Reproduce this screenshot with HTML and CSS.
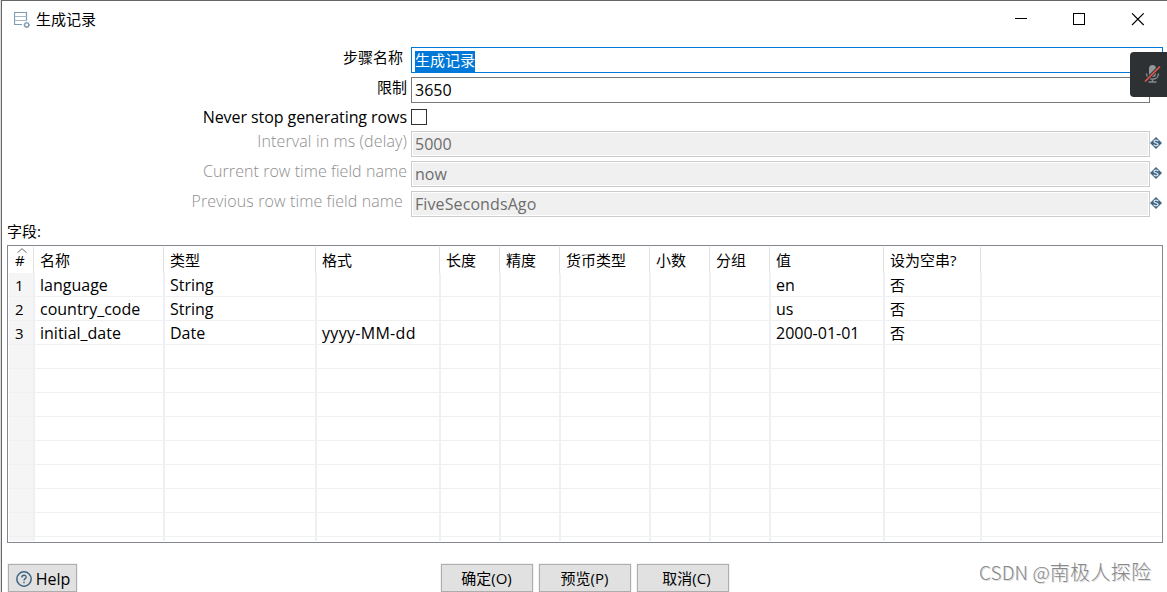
FILE: index.html
```html
<!DOCTYPE html>
<html lang="zh-CN">
<head>
<meta charset="utf-8">
<title>生成记录</title>
<link rel="stylesheet" href="styles.css">
</head>
<body>
<div class="window">
  <header class="titlebar">
    <svg class="app-icon" width="17" height="17" viewBox="0 0 17 17" fill="none" stroke="#7d9bb3">
      <path d="M8 12.500H.500V.500H12.500V8.500" stroke-width="1.200"/><path d="M.500 4.500H12.500M.500 8.500H12.500" stroke="#a3b8c9"/>
      <circle cx="12.700" cy="12.900" r="2.100" stroke-width="1.300"/><path d="M12.700 9.700v1M12.700 15v1M9.500 12.900h1M15 12.900h1M10.500 10.700l.7.7M14.300 14.500l.7.7M15 10.700l-.7.7M11.200 14.500l-.7.7"/>
    </svg>
    <h1 class="title">生成记录</h1>
    <svg class="win-controls" width="131" height="14" viewBox="0 0 131 14" fill="none" stroke="#000">
      <path d="M0 5.500H12"/><rect x="58.500" y=".500" width="11" height="11"/><path d="M117 .300L128.700 12M128.700 .300L117 12" stroke-width="1.100"/>
    </svg>
  </header>
  <form class="form">
    <div class="row"><label class="label pad">步骤名称</label><div class="field focus wide"><span class="sel">生成记录</span></div></div>
    <div class="row"><label class="label">限制</label><div class="field">3650</div></div>
    <div class="row check-row"><label class="label never">Never stop generating rows</label><span class="checkbox"></span></div>
    <div class="row"><label class="label off interval">Interval in ms (delay)</label><div class="field disabled">5000</div><svg class="var" width="12" height="12" viewBox="0 0 12 12"><path d="M6 0L12 6L6 12L0 6Z" fill="#406583"/><path d="M8.200 4.300C7.700 2.700 4 2.700 4 4.500C4 6.300 8.100 5.500 8.100 7.500C8.100 9.200 4.200 9.200 3.800 7.600" fill="none" stroke="#dce5ec" stroke-width="1.300"/></svg></div>
    <div class="row"><label class="label off current">Current row time field name</label><div class="field disabled">now</div><svg class="var" width="12" height="12" viewBox="0 0 12 12"><path d="M6 0L12 6L6 12L0 6Z" fill="#406583"/><path d="M8.200 4.300C7.700 2.700 4 2.700 4 4.500C4 6.300 8.100 5.500 8.100 7.500C8.100 9.200 4.200 9.200 3.800 7.600" fill="none" stroke="#dce5ec" stroke-width="1.300"/></svg></div>
    <div class="row"><label class="label off previous pad">Previous row time field name</label><div class="field disabled five">FiveSecondsAgo</div><svg class="var" width="12" height="12" viewBox="0 0 12 12"><path d="M6 0L12 6L6 12L0 6Z" fill="#406583"/><path d="M8.200 4.300C7.700 2.700 4 2.700 4 4.500C4 6.300 8.100 5.500 8.100 7.500C8.100 9.200 4.200 9.200 3.800 7.600" fill="none" stroke="#dce5ec" stroke-width="1.300"/></svg></div>
  </form>
  <div class="caption">字段:</div>
  <div class="table">
    <div class="tr head"><span class="num">#<svg class="sort" width="10" height="5" viewBox="0 0 10 5" fill="none" stroke="#666"><path d="M.500 4.700L5 .700L9.500 4.700"/></svg></span><span>名称</span><span>类型</span><span>格式</span><span>长度</span><span>精度</span><span>货币类型</span><span>小数</span><span>分组</span><span>值</span><span>设为空串?</span><span></span></div>
    <div class="tr"><span>1</span><span>language</span><span>String</span><span></span><span></span><span></span><span></span><span></span><span></span><span>en</span><span class="zh">否</span><span></span></div>
    <div class="tr"><span>2</span><span>country_code</span><span>String</span><span></span><span></span><span></span><span></span><span></span><span></span><span>us</span><span class="zh">否</span><span></span></div>
    <div class="tr"><span>3</span><span>initial_date</span><span>Date</span><span class="format">yyyy-MM-dd</span><span></span><span></span><span></span><span></span><span></span><span>2000-01-01</span><span class="zh">否</span><span></span></div>
    <div class="tr"><span></span><span></span><span></span><span></span><span></span><span></span><span></span><span></span><span></span><span></span><span></span><span></span></div>
    <div class="tr"><span></span><span></span><span></span><span></span><span></span><span></span><span></span><span></span><span></span><span></span><span></span><span></span></div>
    <div class="tr"><span></span><span></span><span></span><span></span><span></span><span></span><span></span><span></span><span></span><span></span><span></span><span></span></div>
    <div class="tr"><span></span><span></span><span></span><span></span><span></span><span></span><span></span><span></span><span></span><span></span><span></span><span></span></div>
    <div class="tr"><span></span><span></span><span></span><span></span><span></span><span></span><span></span><span></span><span></span><span></span><span></span><span></span></div>
    <div class="tr"><span></span><span></span><span></span><span></span><span></span><span></span><span></span><span></span><span></span><span></span><span></span><span></span></div>
    <div class="tr"><span></span><span></span><span></span><span></span><span></span><span></span><span></span><span></span><span></span><span></span><span></span><span></span></div>
    <div class="tr"><span></span><span></span><span></span><span></span><span></span><span></span><span></span><span></span><span></span><span></span><span></span><span></span></div>
    <div class="tr last"><span></span><span></span><span></span><span></span><span></span><span></span><span></span><span></span><span></span><span></span><span></span><span></span></div>
  </div>
  <footer class="buttons">
    <div class="btn help"><svg width="16" height="16" viewBox="0 0 16 16" fill="none" stroke="#3d6480"><circle cx="8" cy="8" r="7.200" stroke-width="1.500"/><path d="M5.800 6.500C5.800 3.500 10.300 3.700 10.200 6.200C10.100 7.700 8 7.700 8 9.500M8 10.700V12.200" stroke-width="1.400"/></svg>Help</div>
    <div class="actions"><div class="btn">确定(O)</div><div class="btn">预览(P)</div><div class="btn cancel">取消(C)</div></div>
    <div class="watermark"><span class="csdn">CSDN @</span>南极人探险</div>
  </footer>
</div>
<div class="mic">
  <svg width="18" height="20" viewBox="0 0 18 20" fill="none"><rect x="5" y="1" width="7" height="12" rx="3.500" fill="#92979a"/><path d="M2.500 9.500C2.500 17 14.500 17 14.500 9.500M8.500 15V18M4.500 18H12.500" stroke="#858a8d" stroke-width="1.500"/><path d="M1 17.500L16 2.500" stroke="#2d3134" stroke-width="3.500"/><path d="M1 17.500L16 2.500" stroke="#e2584e" stroke-width="1.700"/></svg>
</div>
</body>
</html>
```
FILE: styles.css
```css
* { box-sizing: border-box; }
body {
  margin: 0;
  width: 1167px;
  height: 592px;
  overflow: hidden;
  background: #ddd;
  color: #000;
  font: 15px/20px "Open Sans", "Noto Sans CJK SC", sans-serif;
  white-space: nowrap;
}
.window {
  height: 592px;
  margin-left: 1px;
  border-top: 1px solid #666;
  border-left: 1px solid #666;
  background: #fff;
}
.titlebar { display: flex; height: 46px; padding: 10px 23px 0 12px; align-items: flex-start; }
.title { margin: -2px 0 0 5px; font: inherit; }
.app-icon { margin-top: 1px; }
.win-controls { margin: 2px -2px 0 auto; }

.form { display: grid; gap: 4px; }
.row { display: grid; grid-template-columns: 405px 743px 12px; height: 26px; }
.row > :nth-child(2) { margin-left: 4px; }
.label { text-align: right; line-height: 20px; }
.label.pad { padding-right: 4px; }
.off { color: #8e8e8e; font-weight: 300; font-size: 16px; line-height: 21px; }
.interval { letter-spacing: .13px; }
.current { letter-spacing: .06px; }
.previous { letter-spacing: .11px; }
.never { font-size: 16px; letter-spacing: -.07px; }
.field { height: 26px; border: 1px solid #7a7a7a; padding: 2px 3px; font-size: 16px; line-height: 21px; }
.field.focus { border-color: #0078d7; font-size: 15px; line-height: 20px; }
.field.wide { width: 752px; }
.sel { display: inline-block; height: 21px; line-height: 19px; background: #0078d7; color: #fff; }
.field.disabled { border-color: #ccc; background: #f0f0f0; box-shadow: inset 0 0 0 1px #fff; color: #6d6d6d; }
.field.five { letter-spacing: .1px; }
.check-row { height: 20px; }
.check-row .label { line-height: 21px; }
.checkbox { width: 16px; height: 16px; margin-top: 2px; border: 1px solid #333; }
.var { margin-top: 6px; }

.caption { height: 28px; padding: 4px 0 0 5px; }
.table { width: 1156px; height: 298px; margin-left: 5px; padding: 1px; border: 1px solid #828790; }
.tr {
  display: grid;
  grid-template-columns: 26px 130px 152px 124px 60px 60px 90px 60px 60px 114px 97px 1fr;
  grid-template-rows: 100%;
  height: 24px;
  font-size: 16px;
}
.tr > span { border-right: 2px solid #eef0f5; border-bottom: 1px solid #f0f0f0; padding-left: 5px; line-height: 25px; }
.tr > .zh { font-size: 15px; line-height: 24px; }
.tr > .format { letter-spacing: .3px; }
.tr > span:first-child { padding-left: 6px; background: #f5f5f5; font-size: 15px; }
.tr > span:last-child { border-right: 0; }
.tr.head { height: 26px; font-size: 15px; }
.tr.head > span { border-bottom: 0; border-right: 1px solid #e0e0e0; margin-right: 1px; line-height: 27px; }
.tr.head > span:last-child { border: 0; }
.tr.head > span:first-child { background: #fff; position: relative; line-height: 26px; }
.sort { position: absolute; left: 8px; top: 1px; }
.tr.last { height: 4px; }
.tr.last > span { border-bottom: 0; }

.buttons { display: flex; align-items: flex-start; padding: 21px 0 0 6px; }
.btn { display: flex; align-items: center; justify-content: center; width: 92px; height: 28px; padding-right: 1px; border: 1px solid #adadad; background: #e1e1e1; box-shadow: 0 0 0 1px #f2f2f2; }
.btn.help { width: 69px; gap: 4px; padding: 1px 0 0 1px; font-size: 16px; }
.btn.cancel { padding-left: 8px; }
.actions { display: flex; gap: 6px; margin-left: 364px; }
.watermark { margin: -3px 0 0 250px; color: #888; font: 300 20px/22px "Noto Sans CJK SC", sans-serif; letter-spacing: .3px; text-shadow: 1px 1px 0 #ddd; }
.csdn { font-size: 19px; letter-spacing: .1px; }

.mic { position: absolute; left: 1130px; top: 52px; width: 37px; height: 45px; padding: 12px 0 0 14px; border-radius: 4px 0 0 4px; background: #2d3134; }
```
